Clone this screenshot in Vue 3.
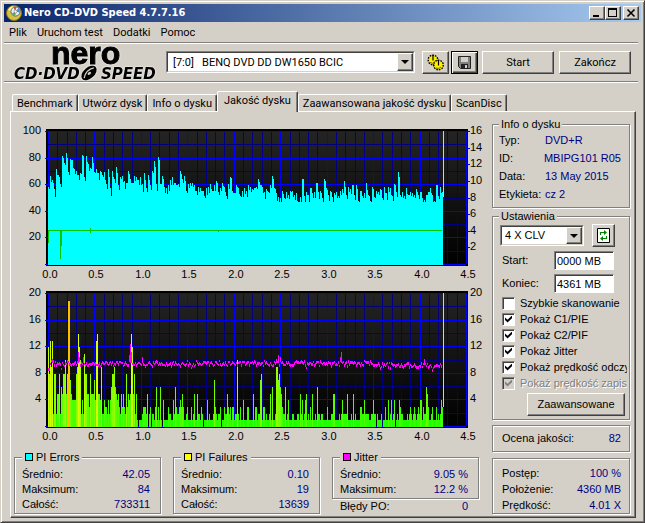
<script setup>
import { ref, reactive } from 'vue'

const menu = ['Plik', 'Uruchom test', 'Dodatki', 'Pomoc']
const tabs = ['Benchmark', 'Utwórz dysk', 'Info o dysku', 'Jakość dysku', 'Zaawansowana jakość dysku', 'ScanDisc']
const activeTab = ref('Jakość dysku')

const discInfo = [
  ['Typ:', 'DVD+R'],
  ['ID:', 'MBIPG101 R05'],
  ['Data:', '13 May 2015'],
  ['Etykieta:', 'cz 2']
]

const range = reactive({ start: '0000 MB', end: '4361 MB' })

const options = reactive([
  { label: 'Szybkie skanowanie', checked: false },
  { label: 'Pokaż C1/PIE', checked: true },
  { label: 'Pokaż C2/PIF', checked: true },
  { label: 'Pokaż Jitter', checked: true },
  { label: 'Pokaż prędkość odczytu', checked: true },
  { label: 'Pokaż prędkość zapisu', checked: true, disabled: true }
])

const progress = [
  ['Postęp:', '100 %'],
  ['Położenie:', '4360 MB'],
  ['Prędkość:', '4.01 X']
]

const stats = [
  { title: 'PI Errors', color: '#00ffff', rows: [['Średnio:', '42.05'], ['Maksimum:', '84'], ['Całość:', '733311']] },
  { title: 'PI Failures', color: '#ffff00', rows: [['Średnio:', '0.10'], ['Maksimum:', '19'], ['Całość:', '13639']] },
  { title: 'Jitter', color: '#ff00ff', rows: [['Średnio:', '9.05 %'], ['Maksimum:', '12.2 %']], extra: ['Błędy PO:', '0'] }
]

// plot area inside the chart svg
const LEFT = 34
const TOP = 11
const BOTTOM = 144
const RIGHT = 452
const SAMPLES = 395

const noise = (n) => {
  const v = Math.sin(n * 12.9898 + 4.1) * 43758.5453
  return v - Math.floor(v)
}

const gridX = Array.from({ length: 46 }, (_, i) => ({
  x: Math.round(LEFT + (i * (RIGHT - LEFT)) / 45),
  major: i % 5 === 0
})).sort((a, b) => a.major - b.major)
const gridY = Array.from({ length: 11 }, (_, i) => ({
  y: Math.round(TOP + (i * (BOTTOM - TOP)) / 10),
  major: i % 2 === 0
})).sort((a, b) => a.major - b.major)
const xLabels = Array.from({ length: 10 }, (_, i) => ({
  x: Math.round(LEFT + 2 + (i * (RIGHT - LEFT)) / 9),
  text: (i / 2).toFixed(1)
}))

const scaleLabels = (max, step) => {
  const out = []
  for (let v = max; v > 0; v -= step) {
    out.push({ text: v, y: Math.round(14 + ((max - v) / max) * 133) })
  }
  return out
}

/* PI errors */
const pie = [
  59, 67, 64, 57, 72, 68, 61, 82, 77, 84, 70, 80, 79, 72, 71, 68, 69, 83, 66, 82, 76, 73, 81, 70, 72,
  69, 71, 68, 70, 61, 72, 58, 71, 65, 74, 60, 66, 67, 63, 62, 71, 65, 62, 67, 66, 64, 66, 61, 69, 58,
  68, 60, 71, 78, 61, 81, 61, 67, 59, 58, 60, 64, 66, 62, 60, 61, 71, 65, 67, 56, 61, 62, 62, 60, 56,
  59, 58, 56, 52, 58, 59, 61, 56, 60, 63, 55, 58, 62, 59, 52, 61, 66, 56, 54, 60, 58, 52, 56, 58,
  56, 60, 59, 57, 58, 59, 65, 60, 59, 55, 57, 55, 60, 67, 58, 54, 51, 50, 56, 50, 55, 53, 56, 56, 53,
  54, 47, 51, 65, 52, 55, 53, 58, 54, 55, 62, 55, 56, 50, 65, 58, 53, 56, 51, 54, 55, 52, 56, 57, 63,
  53, 59, 57, 60, 53, 60, 48, 56, 52, 54, 62, 53, 48, 59, 51, 56, 55, 57, 50, 59, 54, 59, 58, 52, 61,
  55, 70, 53, 55, 52, 58, 53, 55, 54, 53, 57, 53, 55, 50, 49, 53, 55, 58, 53, 48, 60, 52, 59, 55
]
const pieBars = Array.from({ length: SAMPLES }, (_, i) => {
  const peak = pie[i >> 1] ?? 54
  const v = i % 2 ? Math.max(47, peak - noise(i) * 6) : peak
  return { x: LEFT + i, h: Math.round(v * 1.33), color: '#00ffff' }
})

/* PI failures: [sample, value] */
const pifPeaks = new Map([
  [0, 12], [1, 8], [2, 13], [3, 9], [4, 13], [6, 8], [7, 8], [9, 5], [11, 8], [13, 6], [15, 8], [16, 8], [17, 10],
  [19, 8], [20, 19], [21, 19], [23, 5], [25, 4], [28, 8], [29, 9], [30, 14], [31, 12], [32, 10], [34, 4],
  [36, 11], [37, 8], [38, 8], [40, 5], [42, 8], [44, 5], [46, 7], [48, 13], [49, 14], [51, 5], [53, 9],
  [56, 4], [60, 4], [63, 6], [64, 8], [65, 8], [66, 9], [67, 6], [73, 5], [76, 3], [78, 8], [81, 4],
  [83, 14], [84, 12], [86, 8], [88, 5], [99, 5], [102, 3], [108, 6], [112, 6], [115, 4], [125, 4], [127, 6],
  [132, 4], [134, 5], [139, 3], [146, 5], [149, 5], [159, 4], [166, 7], [172, 3], [179, 5], [182, 3],
  [189, 10], [192, 3], [195, 4], [199, 3], [205, 5], [212, 7], [213, 8], [216, 3], [222, 5], [224, 6],
  [228, 9], [229, 9], [230, 7], [231, 8], [232, 6], [233, 5], [237, 6], [240, 4], [252, 5], [254, 4],
  [257, 4], [258, 5], [264, 5], [269, 6], [285, 5], [286, 5], [294, 4], [299, 5], [305, 5], [316, 4],
  [325, 4], [337, 3], [340, 4], [343, 4], [346, 4], [351, 4], [362, 3], [366, 3], [370, 3], [372, 4],
  [373, 4], [375, 3], [378, 6], [379, 5], [384, 3], [388, 3], [393, 4], [394, 3]
])
const pifColor = (v) => {
  if (v > 15) return '#ffc000'
  return `rgb(${Math.min(225, 14 + v * 15)}, 255, 0)`
}
const pifBars = Array.from({ length: SAMPLES }, (_, i) => {
  const n = noise(i + 700)
  let v
  if (i < 88) v = 2 + Math.floor(n * (i < 24 ? 6 : 4))
  else if (n < (i < 235 ? 0.12 : 0.06)) v = 0
  else if (n < 0.55) v = 1
  else v = n < (i < 235 ? 0.8 : 0.95) ? 2 : 3
  v = pifPeaks.get(i) ?? v
  return { x: LEFT + i, h: Math.round(v * 6.65), color: pifColor(v) }
}).filter((bar) => bar.h > 0)

/* jitter */
const jitterPeaks = new Map([
  [0, 8.5], [1, 8.6], [4, 10], [13, 8.5], [30, 11], [31, 10.2], [35, 10.3], [81, 10.5], [82, 12.2], [83, 11],
  [94, 10.3], [143, 8.7], [228, 10], [230, 10.6], [232, 10.2], [258, 8.7], [292, 10.2], [293, 11], [376, 10], [384, 8.4]
])
const jitterBars = Array.from({ length: SAMPLES - 1 }, (_, i) => {
  const base = i > 330 ? 9.1 : 9.4
  const peak = jitterPeaks.get(i)
  const v = peak ?? base + (noise(i + 90) - 0.5) * 0.7
  const y = Math.round(BOTTOM - v * 6.65)
  const h = peak > base ? Math.round((peak - base) * 6.65) : 2 + Math.floor(noise(i + 40) * 2)
  return { x: LEFT + i, y: y - 1, h: Math.max(2, h) }
})

const charts = [
  { id: 'pie', name: 'PI Errors', left: scaleLabels(100, 20), right: scaleLabels(16, 2), bars: pieBars },
  { id: 'pif', name: 'PI Failures', left: scaleLabels(20, 4), right: scaleLabels(20, 4), bars: pifBars }
]
</script>

<template>
  <div class="window">
    <header class="titlebar">
      <svg class="app-icon" viewBox="0 0 16 16" aria-hidden="true">
        <circle cx="8" cy="8" r="7.5" fill="#d8c23c" stroke="#8a7410" />
        <path d="M2 5a7 7 0 0 1 5-4l1 6z" fill="#fff6b0" />
        <circle cx="9.500" cy="6.500" r="4.600" fill="#e4ecf4" stroke="#5a6a80" />
        <path d="M9.500 6.500l3-3.400A4.400 4.400 0 0 1 13.900 7.500z" fill="#4a90d8" />
        <path d="M9.500 6.500L7.500 2.500l2.600-.5z" fill="#d04030" />
        <path d="M9.500 6.500l-3.600 2A4 4 0 0 0 9.500 10.500z" fill="#50a850" />
        <circle cx="9.500" cy="6.500" r="1.400" fill="#fff" stroke="#777" stroke-width=".6" />
      </svg>
      <h1>Nero CD-DVD Speed 4.7.7.16</h1>
      <div class="caption-buttons">
        <button class="raised" aria-label="Minimalizuj">
          <svg viewBox="0 0 12 10"><path d="M2 8h6" stroke="#000" stroke-width="2" /></svg>
        </button>
        <button class="raised" aria-label="Maksymalizuj">
          <svg viewBox="0 0 12 10"><path d="M1 1h9M1.500 1v8M9.500 1v8M1 8.500h9" fill="none" stroke="#000" /><path d="M1 1h9" stroke="#000" stroke-width="2" /></svg>
        </button>
        <button class="raised close" aria-label="Zamknij">
          <svg viewBox="0 0 12 10"><path d="M2.500 1.500l7 7M9.500 1.500l-7 7" stroke="#000" stroke-width="1.600" /></svg>
        </button>
      </div>
    </header>

    <nav class="menu">
      <button v-for="item in menu" :key="item">{{ item }}</button>
    </nav>

    <div class="toolbar">
      <svg class="logo" viewBox="0 0 148 37" role="img" aria-label="Nero CD-DVD Speed">
        <text class="logo-nero" x="38" y="20">nero</text>
        <text class="logo-sub" x="1" y="35">CD·DVD</text>
        <text class="logo-sub" x="88" y="35">SPEED</text>
        <g transform="rotate(-42 76 29)">
          <ellipse cx="76" cy="29" rx="9" ry="5.500" fill="#000" />
          <path d="M69 29.500q7-5 14-1" fill="none" stroke="#d4d0c8" stroke-width="1.300" />
          <ellipse cx="76" cy="29.500" rx="2" ry="1.300" fill="#d4d0c8" />
        </g>
      </svg>

      <div class="combo drive">
        <select aria-label="Napęd">
          <option>[7:0]&nbsp;&nbsp; BENQ DVD DD DW1650 BCIC</option>
        </select>
        <span class="arrow raised"></span>
      </div>

      <button class="btn icon-btn raised" aria-label="Opcje">
        <svg viewBox="0 0 17 17">
          <g fill="#ffee00" stroke="#000">
            <circle cx="6" cy="6" r="4.500" stroke-width="2" stroke-dasharray="1.500 1" />
            <circle cx="6" cy="6" r="4" stroke="none" />
            <circle cx="11.500" cy="11" r="4.500" stroke-width="2" stroke-dasharray="1.500 1" />
            <circle cx="11.500" cy="11" r="4" stroke="none" />
            <path d="M6 1v5.500M11.500 6v5.500" stroke-width="1.200" />
            <path d="M3 8.500q3 2 5-1M9 14q3 1.500 5-1" fill="none" stroke="#807000" />
          </g>
        </svg>
      </button>
      <button class="btn icon-btn raised default" aria-label="Zapisz">
        <svg viewBox="0 0 17 17">
          <path d="M2.500 2.500h12v12h-10l-2-2z" fill="#808080" stroke="#222" />
          <path d="M5 3h7v5H5z" fill="#d4d0c8" />
          <path d="M5 10h7v5H5z" fill="#222" />
          <path d="M9 11h2v3H9z" fill="#d4d0c8" />
        </svg>
      </button>
      <button class="btn text-btn raised">Start</button>
      <button class="btn text-btn raised last">Zakończ</button>
    </div>

    <div class="tabs" role="tablist">
      <button
        v-for="tab in tabs"
        :key="tab"
        role="tab"
        :class="['tab', { active: tab === activeTab }]"
        :aria-selected="tab === activeTab"
        @click="activeTab = tab"
      >
        {{ tab }}
      </button>
    </div>

    <main class="page">
      <section class="results">
        <svg v-for="chart in charts" :key="chart.id" class="chart" viewBox="0 0 474 162" role="img" :aria-label="chart.name">
          <defs>
            <linearGradient :id="'bg-' + chart.id" x1="0" y1="0" x2="0" y2="1">
              <stop offset="0" stop-color="#242424" />
              <stop offset="1" stop-color="#000000" />
            </linearGradient>
          </defs>
          <g shape-rendering="crispEdges">
            <rect x="32" y="9" width="422" height="137" fill="#000" />
            <rect :x="LEFT" :y="TOP" :width="RIGHT - LEFT" :height="BOTTOM - TOP" :fill="`url(#bg-${chart.id})`" />
            <rect v-for="g in gridX" :key="'x' + g.x" :x="g.x" :y="TOP" width="1" :height="BOTTOM - TOP" :fill="g.major ? '#0000ff' : '#000080'" />
            <template v-for="g in gridY" :key="'y' + g.y">
              <rect :x="LEFT" :y="g.y" :width="RIGHT - LEFT" height="1" :fill="g.major ? '#0000ff' : '#000080'" />
              <rect v-if="g.major" x="31" :y="g.y" width="3" height="1" fill="#0000ff" />
            </template>
            <template v-if="chart.id === 'pie'">
              <rect v-for="t in chart.right" :key="'t' + t.text" x="452" :y="t.y - 3" width="4" height="1" fill="#0000ff" />
            </template>
            <rect v-for="bar in chart.bars" :key="bar.x" :x="bar.x" :y="BOTTOM + 1 - bar.h" width="1" :height="bar.h" :fill="bar.color" />
            <rect x="429" :y="TOP" width="1" :height="chart.id === 'pie' ? 66 : 114" fill="#d4d0c8" />
            <path v-if="chart.id === 'pie'" d="M34 110.500H428M34.500 110v13M46.500 110v29M47.500 110v16M76.500 108v5M204.500 110v2" fill="none" stroke="#00c800" />
            <template v-if="chart.id === 'pif'">
              <rect v-for="j in jitterBars" :key="'j' + j.x" :x="j.x" :y="j.y" width="1" :height="j.h" fill="#ff00ff" />
            </template>
          </g>
          <g class="axis">
            <text v-for="l in chart.left" :key="'l' + l.text" x="27" :y="l.y" text-anchor="end">{{ l.text }}</text>
            <text v-for="l in chart.right" :key="'r' + l.text" x="456" :y="l.y">{{ l.text }}</text>
            <text v-for="l in xLabels" :key="'b' + l.text" :x="l.x" y="158" text-anchor="middle">{{ l.text }}</text>
          </g>
        </svg>

        <div class="stats">
          <div v-for="s in stats" :key="s.title">
            <fieldset class="group stat">
              <legend><i class="swatch" :style="{ background: s.color }"></i>{{ s.title }}</legend>
              <dl v-for="[name, value] in s.rows" :key="name">
                <dt>{{ name }}</dt>
                <dd>{{ value }}</dd>
              </dl>
            </fieldset>
            <dl v-if="s.extra" class="extra">
              <dt>{{ s.extra[0] }}</dt>
              <dd>{{ s.extra[1] }}</dd>
            </dl>
          </div>
        </div>
      </section>

      <aside class="side">
        <fieldset class="group info">
          <legend>Info o dysku</legend>
          <dl v-for="[name, value] in discInfo" :key="name">
            <dt>{{ name }}</dt>
            <dd>{{ value }}</dd>
          </dl>
        </fieldset>

        <fieldset class="group settings">
          <legend>Ustawienia</legend>
          <div class="speed-row">
            <div class="combo speed">
              <select aria-label="Prędkość">
                <option>4 X CLV</option>
              </select>
              <span class="arrow raised"></span>
            </div>
            <button class="btn refresh raised" aria-label="Odśwież">
              <svg viewBox="0 0 13 15">
                <path d="M.5.5h12v14H.5z" fill="#fff" stroke="#000" />
                <path d="M3.500 7V4.500H8M9.500 8v2.500H5" fill="none" stroke="#008000" stroke-width="1.200" />
                <path d="M7 2l3 2.500L7 7zM6 8l-3 2.500L6 13z" fill="#008000" />
              </svg>
            </button>
          </div>
          <div class="field">
            <label for="range-start">Start:</label>
            <input id="range-start" v-model="range.start" type="text" />
          </div>
          <div class="field">
            <label for="range-end">Koniec:</label>
            <input id="range-end" v-model="range.end" type="text" />
          </div>
          <div class="options">
            <label v-for="o in options" :key="o.label" :class="{ disabled: o.disabled }">
              <input v-model="o.checked" type="checkbox" :disabled="o.disabled" />
              <span>{{ o.label }}</span>
            </label>
          </div>
          <button class="btn advanced raised">Zaawansowane</button>
        </fieldset>

        <div class="group box score">
          <dl>
            <dt>Ocena jakości:</dt>
            <dd>82</dd>
          </dl>
        </div>

        <div class="group box progress">
          <dl v-for="[name, value] in progress" :key="name">
            <dt>{{ name }}</dt>
            <dd>{{ value }}</dd>
          </dl>
        </div>
      </aside>
    </main>
  </div>
</template>

<style>
body {
  margin: 0;
  background: #d4d0c8;
}
</style>

<style scoped>
.window {
  display: flex;
  flex-direction: column;
  box-sizing: border-box;
  min-height: 100vh;
  padding: 3px;
  border: 1px solid;
  border-color: #d4d0c8 #404040 #404040 #d4d0c8;
  box-shadow: inset 1px 1px 0 #fff, inset -1px -1px 0 #808080;
  background: #d4d0c8;
  color: #000;
  font: 11px/13px "Liberation Sans", Arial, sans-serif;
}

button,
input,
select {
  box-sizing: border-box;
  margin: 0;
  padding: 0;
  border: 0;
  border-radius: 0;
  background: none;
  color: inherit;
  font: inherit;
}

dl,
dd {
  margin: 0;
}

dl {
  display: flex;
  justify-content: space-between;
  white-space: nowrap;
}

dd {
  color: #000080;
}

.raised {
  border: 1px solid;
  border-color: #fff #404040 #404040 #fff;
  background: #d4d0c8;
  box-shadow: inset -1px -1px 0 #808080;
}

/* Title bar */
.titlebar {
  display: flex;
  align-items: center;
  height: 18px;
  padding: 0 2px;
  background: linear-gradient(to right, #0a246a, #a6caf0);
}

.app-icon {
  width: 16px;
  height: 16px;
}

.titlebar h1 {
  flex: 1;
  margin: 0 0 0 2px;
  color: #fff;
  font: bold 11px/18px "DejaVu Sans Condensed", "Noto Sans", sans-serif;
}

.caption-buttons {
  display: flex;
}

.caption-buttons button {
  width: 16px;
  height: 14px;
  line-height: 0;
}

.caption-buttons .close {
  margin-left: 2px;
}

.caption-buttons svg {
  width: 12px;
  height: 10px;
}

/* Menu */
.menu,
.toolbar {
  display: flex;
  margin-right: 3px;
  border-bottom: 1px solid #808080;
  box-shadow: 0 1px 0 #fff;
}

.menu {
  gap: 10px;
  height: 20px;
  padding-left: 5px;
  font-family: Roboto, sans-serif;
}

/* Toolbar */
.toolbar {
  align-items: center;
  height: 38px;
  padding: 0 7px 0 9px;
  font-family: Roboto, sans-serif;
}

.logo {
  width: 148px;
  height: 37px;
  overflow: visible;
  filter: drop-shadow(0 0 1px #fff);
}

.logo-nero {
  font: bold 32px "Liberation Sans", sans-serif;
  stroke: #000;
  stroke-width: 1px;
}

.logo-sub {
  font: italic bold 15px "DejaVu Sans", sans-serif;
}

.combo {
  position: relative;
  box-sizing: border-box;
  border: 1px solid;
  border-color: #808080 #fff #fff #808080;
}

.combo select {
  display: block;
  width: 100%;
  height: 100%;
  padding-left: 5px;
  border: 1px solid;
  border-color: #404040 #d4d0c8 #d4d0c8 #404040;
  background: #fff;
  appearance: none;
}

.arrow {
  position: absolute;
  box-sizing: border-box;
  top: 1px;
  right: 1px;
  bottom: 1px;
  width: 16px;
  pointer-events: none;
}

.arrow::after {
  content: "";
  position: absolute;
  left: 3px;
  top: calc(50% - 2px);
  border: 4px solid transparent;
  border-top-color: #000;
  border-bottom: 0;
}

.drive {
  flex: 1;
  height: 22px;
  margin: 0 7px 0 5px;
}

.btn {
  height: 23px;
}

.icon-btn {
  width: 27px;
  margin-right: 2px;
  line-height: 0;
}

.icon-btn svg {
  width: 17px;
  height: 17px;
}

.default {
  margin-right: 4px;
  border-color: #000;
  box-shadow: inset 1px 1px 0 #fff, inset -1px -1px 0 #404040, inset -2px -2px 0 #808080;
}

.text-btn {
  width: 72px;
}

.text-btn.last {
  margin-left: 5px;
}

/* Tabs */
.tabs {
  display: flex;
  align-items: flex-end;
  height: 29px;
  padding-left: 8px;
  font-family: Roboto, sans-serif;
}

.tab {
  height: 17px;
  padding: 0 4px;
  border: solid;
  border-width: 1px 1px 0;
  border-color: #fff #404040 #fff #fff;
  border-radius: 2px 2px 0 0;
  box-shadow: inset -1px 0 0 #808080;
  white-space: nowrap;
}

.tab.active {
  z-index: 1;
  height: 21px;
  margin-bottom: -1px;
  padding: 0 6px 3px;
  background: #d4d0c8;
}

/* Page */
.page {
  display: flex;
  flex: 1;
  gap: 4px;
  box-sizing: border-box;
  margin: 0 5px 1px 6px;
  padding: 6px 5px 1px 3px;
  border: 1px solid;
  border-color: #fff #404040 #404040 #fff;
  box-shadow: inset -1px -1px 0 #808080;
}

.results {
  flex: 1;
  min-width: 0;
  padding-top: 2px;
}

.chart {
  display: block;
  width: 100%;
}

.axis {
  font-size: 11px;
}

.stats {
  display: grid;
  grid-template-columns: repeat(3, 1fr);
  gap: 12px;
  margin-top: 7px;
  padding-right: 9px;
}

/* Etched groups */
.group {
  box-sizing: border-box;
  min-width: 0;
  margin: 0;
  padding: 0 8px 0 6px;
  border: 1px solid #808080;
  box-shadow: 1px 1px 0 #fff, inset 1px 1px 0 #fff;
}

.group legend {
  padding: 0 2px;
  background: #d4d0c8;
}

.stat {
  padding: 3px 10px 1px 7px;
  line-height: 15px;
}

.stat legend {
  padding: 0 3px;
  line-height: 13px;
}

.swatch {
  display: inline-block;
  width: 6px;
  height: 6px;
  margin-right: 3px;
  border: 1px solid #000;
}

.extra {
  padding: 1px 11px 0 8px;
}

/* Side column */
.side {
  width: 138px;
}

.info {
  padding-bottom: 4px;
  line-height: 18px;
}

.info legend,
.settings legend {
  line-height: 13px;
}

.info dl {
  justify-content: flex-start;
}

.info dt {
  width: 46px;
}

.settings {
  margin-top: 2px;
  padding: 1px 2px 3px 7px;
}

.settings legend {
  margin-left: -1px;
}

.speed-row {
  display: flex;
  align-items: center;
  justify-content: space-between;
  padding-right: 12px;
}

.speed {
  width: 84px;
  height: 21px;
}

.speed select {
  padding-left: 3px;
}

.refresh {
  width: 23px;
  line-height: 0;
}

.refresh svg {
  width: 13px;
  height: 15px;
}

.field {
  display: flex;
  align-items: center;
  justify-content: space-between;
  margin-top: 4px;
  padding: 0 13px 0 2px;
}

.field input {
  width: 60px;
  height: 19px;
  padding: 0 2px;
  border: 1px solid;
  border-color: #808080 #fff #fff #808080;
  background: #fff;
  box-shadow: inset 1px 1px 0 #404040;
}

.options {
  margin: 2px 0;
  padding-left: 2px;
}

.options label {
  display: flex;
  align-items: center;
  height: 16px;
  overflow: hidden;
  white-space: nowrap;
}

.options input {
  flex: none;
  width: 13px;
  height: 13px;
  margin-right: 5px;
  border: 1px solid;
  border-color: #808080 #fff #fff #808080;
  background: #fff;
  box-shadow: inset 1px 1px 0 #404040;
  appearance: none;
}

.options input:checked::after {
  content: "";
  display: block;
  width: 7px;
  height: 7px;
  margin: 2px;
  background: #000;
  clip-path: polygon(0 28%, 36% 62%, 100% 0, 100% 38%, 36% 100%, 0 66%);
}

.options .disabled {
  color: #808080;
  text-shadow: 1px 1px 0 #fff;
}

.options .disabled input {
  background: #d4d0c8;
}

.options .disabled input::after {
  background: #808080;
}

.advanced {
  display: block;
  width: 98px;
  margin: 0 2px 0 auto;
}

.box {
  padding: 0 8px 0 9px;
}

.score {
  margin-top: 5px;
  line-height: 25px;
}

.progress {
  margin-top: 6px;
  padding-top: 6px;
  line-height: 16px;
}
</style>
